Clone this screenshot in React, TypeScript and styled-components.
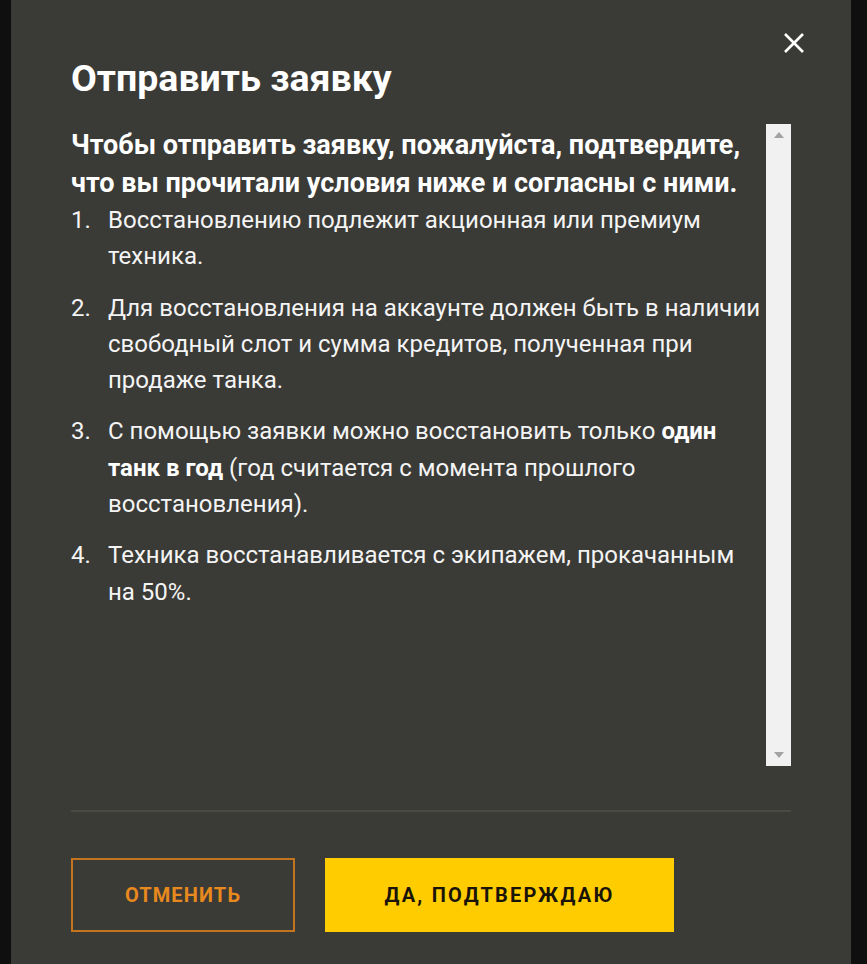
import React from "react";
import styled, { createGlobalStyle } from "styled-components";

const GlobalStyle = createGlobalStyle`
  html, body { margin: 0; padding: 0; background: #0f0f0f; }
  body { font-family: Roboto, "Noto Sans", "Liberation Sans", sans-serif; }
  * { box-sizing: border-box; }
`;

const Page = styled.div`
  display: flex;
  min-height: 964px;
  padding: 0 16px 0 11px;
`;

const Modal = styled.section`
  flex: 1;
  background: #3a3a36;
  display: flex;
  flex-direction: column;
  padding: 0 60px 32px 60px;
  color: #fff;
`;

const Header = styled.header`
  display: flex;
  justify-content: space-between;
  align-items: flex-start;
  padding-top: 30px;
  height: 124px;
`;

const Title = styled.h1`
  margin: 26px 0 0 0;
  font-size: 37.5px;
  line-height: 44px;
  font-weight: 700;
  color: #fff;
`;

const CloseButton = styled.button`
  width: 26px;
  height: 26px;
  padding: 0;
  margin-right: -16px;
  border: 0;
  background: transparent;
  cursor: pointer;
  display: flex;
  align-items: center;
  justify-content: center;
`;

const ScrollArea = styled.div`
  display: flex;
  height: 642px;
`;

const Content = styled.div`
  flex: 1;
  overflow: hidden;
  padding-top: 2px;
  padding-right: 4px;
`;

const Intro = styled.p`
  margin: 0;
  font-size: 27px;
  line-height: 38px;
  font-weight: 700;
  color: #fff;
`;

const List = styled.ol`
  list-style: none;
  margin: 0;
  padding: 0;
  display: flex;
  flex-direction: column;
  gap: 15px;
`;

const Item = styled.li`
  display: flex;
  font-size: 24px;
  line-height: 36.3px;
  color: #f4f4f4;
`;

const Num = styled.span`
  flex: 0 0 37px;
`;

const ItemText = styled.span`
  flex: 1;
  strong { font-weight: 700; color: #fff; }
`;

const Track = styled.div`
  width: 25px;
  background: #f1f1f1;
  display: flex;
  flex-direction: column;
  justify-content: space-between;
  align-items: center;
  padding: 8px 0;
`;

const Divider = styled.hr`
  margin: 44px 0 0 0;
  border: 0;
  height: 2px;
  background: #4a4a45;
`;

const Actions = styled.div`
  display: flex;
  gap: 30px;
  margin-top: 46px;
`;

const CancelButton = styled.button`
  width: 224px;
  height: 74px;
  background: transparent;
  border: 2px solid #c4741f;
  color: #e8891e;
  font-family: Roboto, "Noto Sans", sans-serif;
  font-weight: 700;
  font-size: 20px;
  letter-spacing: 1.1px;
  text-transform: uppercase;
  cursor: pointer;
`;

const ConfirmButton = styled.button`
  width: 349px;
  height: 74px;
  background: #ffcc00;
  border: 0;
  color: #1a1408;
  font-family: Roboto, "Noto Sans", sans-serif;
  font-weight: 700;
  font-size: 20px;
  letter-spacing: 2.2px;
  text-transform: uppercase;
  cursor: pointer;
`;

const items: React.ReactNode[] = [
  <>Восстановлению подлежит акционная или премиум техника.</>,
  <>Для восстановления на аккаунте должен быть в наличии свободный слот и сумма кредитов, полученная при продаже танка.</>,
  <>
    С помощью заявки можно восстановить только <strong>один танк в год</strong> (год считается с момента прошлого восстановления).
  </>,
  <>Техника восстанавливается с экипажем, прокачанным на 50%.</>,
];

export default function App() {
  return (
    <>
      <GlobalStyle />
      <Page>
        <Modal>
          <Header>
            <Title>Отправить заявку</Title>
            <CloseButton aria-label="Закрыть">
              <svg width="22" height="22" viewBox="0 0 22 22">
                <path d="M2 2 L20 20 M20 2 L2 20" stroke="#fff" strokeWidth="2.6" strokeLinecap="butt" />
              </svg>
            </CloseButton>
          </Header>
          <ScrollArea>
            <Content>
              <Intro>
                Чтобы отправить заявку, пожалуйста, подтвердите, что вы прочитали условия ниже и согласны с ними.
              </Intro>
              <List>
                {items.map((it, i) => (
                  <Item key={i}>
                    <Num>{i + 1}.</Num>
                    <ItemText>{it}</ItemText>
                  </Item>
                ))}
              </List>
            </Content>
            <Track>
              <svg width="10" height="6" viewBox="0 0 10 6">
                <polygon points="5,0 10,6 0,6" fill="#a3a3a3" />
              </svg>
              <svg width="10" height="6" viewBox="0 0 10 6">
                <polygon points="0,0 10,0 5,6" fill="#a3a3a3" />
              </svg>
            </Track>
          </ScrollArea>
          <Divider />
          <Actions>
            <CancelButton>Отменить</CancelButton>
            <ConfirmButton>Да, подтверждаю</ConfirmButton>
          </Actions>
        </Modal>
      </Page>
    </>
  );
}
